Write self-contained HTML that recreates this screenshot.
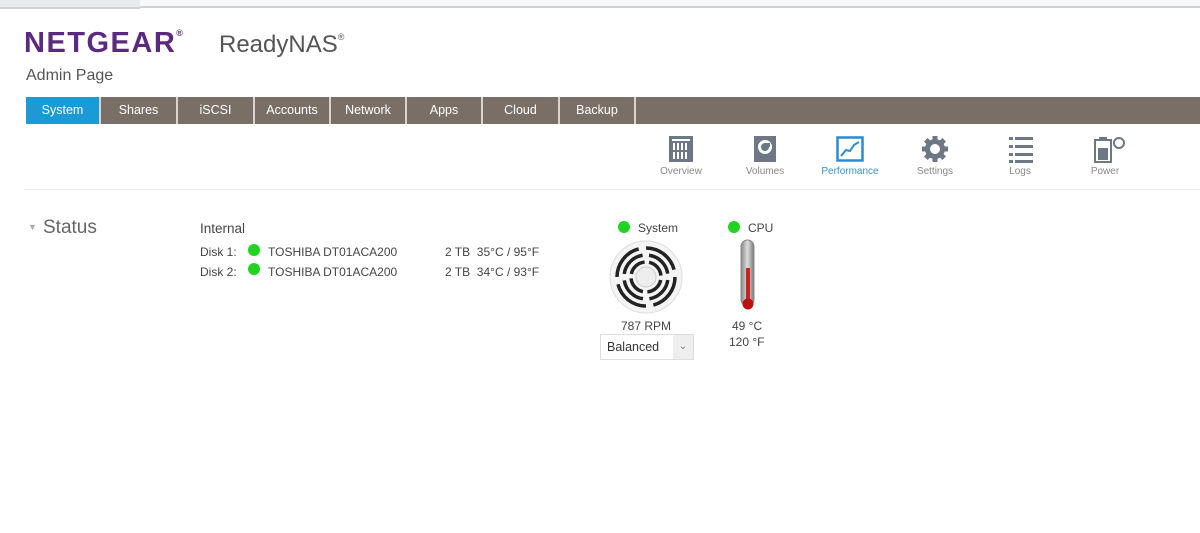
<!DOCTYPE html>
<html><head><style>
body{margin:0;width:1200px;height:533px;background:#fff;font-family:"Liberation Sans",sans-serif;position:relative;overflow:hidden;color:#444}
.a{position:absolute}
.tab{position:absolute;top:97px;height:27px;line-height:27px;text-align:center;color:#fff;font-size:12.5px;background:#7a6f67;border-right:2px solid #d8d4d0;box-sizing:border-box}
.lbl{position:absolute;top:166px;font-size:10px;color:#888;width:80px;text-align:center}
.dot{position:absolute;width:12px;height:12px;border-radius:50%;background:#1fd31f}
.t{position:absolute;font-size:12px;color:#444;white-space:nowrap}
</style></head><body>
<div class="a" style="left:0;top:0;width:1200px;height:7px;background:#e8ebee"></div>
<div class="a" style="left:140px;top:0;width:1060px;height:6px;background:#f6f8fa;border-bottom:2px solid #cfd2d5"></div>
<div class="a" style="left:0;top:7px;width:140px;height:2px;background:#cfd2d5"></div>
<div class="a" style="left:24px;top:27px;font-size:29px;font-weight:bold;color:#5b2a80;letter-spacing:1.5px">NETGEAR<sup style="font-size:9px;vertical-align:16px">®</sup></div>
<div class="a" style="left:219px;top:31px;font-size:24px;color:#555">ReadyNAS<sup style="font-size:9px;vertical-align:12px">®</sup></div>
<div class="a" style="left:26px;top:67px;font-size:16px;color:#555">Admin Page</div>
<div class="a" style="left:636px;top:97px;width:564px;height:27px;background:#7a6f67"></div>
<div class="tab" style="left:26px;width:75px;background:#1a9bd7">System</div>
<div class="tab" style="left:101px;width:77px">Shares</div>
<div class="tab" style="left:178px;width:77px">iSCSI</div>
<div class="tab" style="left:255px;width:76px">Accounts</div>
<div class="tab" style="left:331px;width:76px">Network</div>
<div class="tab" style="left:407px;width:76px">Apps</div>
<div class="tab" style="left:483px;width:77px">Cloud</div>
<div class="tab" style="left:560px;width:76px">Backup</div>

<svg class="a" style="left:668px;top:135px" width="26" height="28"><rect x="1" y="1" width="24" height="26" fill="#6d7785"/><g fill="#fff"><rect x="4" y="4" width="18" height="2"/><rect x="5" y="8" width="2" height="7"/><rect x="9" y="8" width="2" height="7"/><rect x="13" y="8" width="2" height="7"/><rect x="17" y="8" width="2" height="7"/><rect x="5" y="17" width="2" height="7"/><rect x="9" y="17" width="2" height="7"/><rect x="13" y="17" width="2" height="7"/><rect x="17" y="17" width="2" height="7"/></g></svg>
<div class="lbl" style="left:641px">Overview</div>
<svg class="a" style="left:753px;top:135px" width="24" height="28"><rect x="1" y="1" width="22" height="26" fill="#6d7785"/><circle cx="12" cy="12" r="7" fill="#fff"/><circle cx="12" cy="12" r="4" fill="#6d7785"/><rect x="12" y="8" width="5" height="4" fill="#6d7785"/></svg>
<div class="lbl" style="left:725px">Volumes</div>
<svg class="a" style="left:836px;top:136px" width="28" height="26"><rect x="1.5" y="1.5" width="25" height="23" fill="#fff" stroke="#2a8ad4" stroke-width="2.5"/><path d="M5 20 L10 14 L14 15 L18 9 L23 6" stroke="#2a8ad4" stroke-width="2" fill="none"/></svg>
<div class="lbl" style="left:810px;color:#3a8ed0">Performance</div>
<svg class="a" style="left:921px;top:135px" width="28" height="28" viewBox="0 0 28 28"><g fill="#6d7785"><circle cx="14" cy="14" r="10"/><g stroke="#6d7785" stroke-width="5"><path d="M14 1v26M1 14h26M4.8 4.8l18.4 18.4M23.2 4.8L4.8 23.2"/></g></g><circle cx="14" cy="14" r="5" fill="#fff"/></svg>
<div class="lbl" style="left:895px">Settings</div>
<svg class="a" style="left:1008px;top:135px" width="26" height="28"><g fill="#6d7785"><rect x="1" y="2" width="4" height="3"/><rect x="7" y="2" width="18" height="3"/><rect x="1" y="10" width="4" height="3"/><rect x="7" y="10" width="18" height="3"/><rect x="1" y="18" width="4" height="3"/><rect x="7" y="18" width="18" height="3"/><rect x="1" y="25" width="4" height="3"/><rect x="7" y="25" width="18" height="3"/></g></svg>
<div class="lbl" style="left:980px">Logs</div>
<svg class="a" style="left:1093px;top:135px" width="36" height="28"><rect x="2" y="5" width="16" height="22" fill="#fff" stroke="#6d7785" stroke-width="2"/><rect x="6" y="2" width="8" height="3" fill="#6d7785"/><rect x="5" y="13" width="10" height="12" fill="#6d7785"/><circle cx="26" cy="8" r="5" fill="none" stroke="#6d7785" stroke-width="2"/></svg>
<div class="lbl" style="left:1065px">Power</div>
<div class="a" style="left:24px;top:189px;width:1176px;height:1px;background:#eaeaea"></div>

<div class="a" style="left:28px;top:222px;font-size:9px;color:#aaa">▼</div>
<div class="a" style="left:43px;top:217px;font-size:19px;color:#666">Status</div>
<div class="t" style="left:200px;top:221px;font-size:13.5px">Internal</div>
<div class="t" style="left:200px;top:245px">Disk 1:</div><div class="dot" style="left:248px;top:244px"></div>
<div class="t" style="left:268px;top:245px">TOSHIBA DT01ACA200</div>
<div class="t" style="left:445px;top:245px">2 TB &nbsp;35°C / 95°F</div>
<div class="t" style="left:200px;top:265px">Disk 2:</div><div class="dot" style="left:248px;top:263px"></div>
<div class="t" style="left:268px;top:265px">TOSHIBA DT01ACA200</div>
<div class="t" style="left:445px;top:265px">2 TB &nbsp;34°C / 93°F</div>

<div class="dot" style="left:618px;top:221px"></div>
<div class="t" style="left:638px;top:221px">System</div>
<svg class="a" style="left:608px;top:239px" width="76" height="76" viewBox="0 0 76 76"><circle cx="38" cy="38" r="36" fill="#f4f4f4" stroke="#ddd"/><g fill="none" stroke="#222" stroke-width="3.5"><circle cx="38" cy="38" r="29" stroke-dasharray="38 7.5"/><circle cx="38" cy="38" r="22" stroke-dasharray="28 6.5" transform="rotate(8 38 38)"/><circle cx="38" cy="38" r="15" stroke-dasharray="19 4.5" transform="rotate(12 38 38)"/></g><circle cx="38" cy="38" r="10" fill="#eee" stroke="#ccc"/></svg>
<div class="t" style="left:621px;top:319px">787 RPM</div>
<div class="a" style="left:600px;top:334px;width:94px;height:26px;border:1px solid #ddd;box-sizing:border-box;font-size:12.5px;line-height:24px;padding-left:6px;color:#333">Balanced<span style="position:absolute;right:0;top:0;width:20px;height:24px;background:#eee;text-align:center;font-size:10px;color:#777">⌄</span></div>

<div class="dot" style="left:728px;top:221px"></div>
<div class="t" style="left:748px;top:221px">CPU</div>
<svg class="a" style="left:736px;top:238px" width="24" height="76"><defs><linearGradient id="g" x1="0" x2="1"><stop offset="0" stop-color="#888"/><stop offset=".5" stop-color="#ddd"/><stop offset="1" stop-color="#777"/></linearGradient></defs><rect x="5" y="2" width="13" height="66" rx="6.5" fill="url(#g)" stroke="#888"/><rect x="10" y="30" width="4" height="36" fill="#c22"/><circle cx="12" cy="66" r="5.5" fill="#b11"/></svg>
<div class="t" style="left:732px;top:319px">49 °C</div>
<div class="t" style="left:729px;top:335px">120 °F</div>
</body></html>
